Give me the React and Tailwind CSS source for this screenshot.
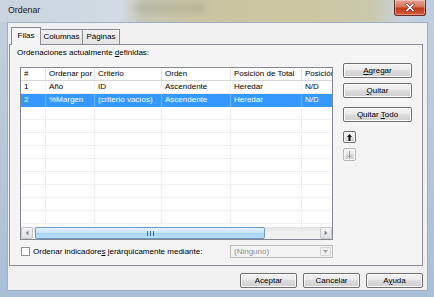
import React from "react";

function WinButton({ children, className = "" }) {
  return (
    <div
      className={
        "flex items-center justify-center rounded-[2px] border border-[#707070] bg-[linear-gradient(180deg,#f2f2f2_0%,#ebebeb_45%,#dddddd_50%,#cfcfcf_100%)] shadow-[inset_0_0_0_1px_#fcfcfc] text-[8px] leading-none text-black " +
        className
      }
    >
      {children}
    </div>
  );
}

const cols = [
  { w: "w-[25px]", label: "#" },
  { w: "w-[49px]", label: "Ordenar por" },
  { w: "w-[67px]", label: "Criterio" },
  { w: "w-[69px]", label: "Orden" },
  { w: "w-[71px]", label: "Posición de Total" },
  { w: "w-[60px]", label: "Posición" },
];

const rows = [
  ["1", "Año", "ID", "Ascendente", "Heredar", "N/D"],
  ["2", "%Margen", "(criterio vacíos)", "Ascendente", "Heredar", "N/D"],
];

export default function App() {
  const emptyRows = Array.from({ length: 10 });
  return (
    <div className="relative flex h-[297px] w-[434px] flex-col overflow-hidden bg-[linear-gradient(180deg,#c3d0dd_0%,#b4c6d8_60%,#a9bfd6_100%)] font-['Liberation_Sans',Arial,sans-serif] text-[8px] text-black">
      {/* title bar */}
      <div className="relative flex h-[22px] shrink-0 items-center bg-[linear-gradient(90deg,#c9d4df_0%,#d2dbe3_28%,#c6c7b6_33%,#c9c4a2_45%,#ccc6a0_70%,#cbc9ad_86%,#c8d3dd_92%,#bccde0_100%)] pl-[8px]">
        <span className="text-[8.8px] text-[#1a1a1a]">Ordenar</span>
        <div className="absolute left-[135px] top-[4px] h-[8px] w-[70px] bg-[#9d9880] opacity-40 blur-[3px]" />
        <div className="absolute right-[8px] top-0 flex h-[16px] w-[32px] items-center justify-center rounded-b-[3px] border border-t-0 border-[#6b2b22] bg-[linear-gradient(180deg,#e8a493_0%,#d7745b_45%,#c43a1c_55%,#d25b34_100%)] shadow-[inset_0_0_0_1px_rgba(255,255,255,0.35)]">
          <svg width="10" height="9" viewBox="0 0 10 9">
            <path d="M2 1.5 L8 7.5 M8 1.5 L2 7.5" stroke="#5a1a10" strokeWidth="2.6" strokeLinecap="square" />
            <path d="M2 1.5 L8 7.5 M8 1.5 L2 7.5" stroke="#ffffff" strokeWidth="1.7" strokeLinecap="square" />
          </svg>
        </div>
      </div>

      {/* client area */}
      <div className="ml-[7px] mr-[6px] flex h-[269px] shrink-0 flex-col border border-[#9fb0c2] bg-[#f0f0f0]">
        {/* tabs */}
        <div className="flex h-[21px] shrink-0 items-end pl-[3px]">
          <div className="relative z-10 mb-[-1px] flex h-[18px] w-[30px] items-center justify-center border border-b-0 border-[#898c95] bg-[#f4f4f4] pb-[1px]">
            Filas
          </div>
          <div className="flex h-[15px] w-[42px] items-center justify-center border border-b-0 border-l-0 border-[#898c95] bg-[linear-gradient(180deg,#f2f2f2,#e4e4e4)]">
            Columnas
          </div>
          <div className="flex h-[15px] w-[37px] items-center justify-center border border-b-0 border-l-0 border-[#898c95] bg-[linear-gradient(180deg,#f2f2f2,#e4e4e4)]">
            Páginas
          </div>
        </div>

        {/* tab panel */}
        <div className="ml-[1px] flex h-[222px] w-[414px] shrink-0 flex-col border border-[#898c95] bg-[#f4f4f4]">
          <div className="ml-[7px] mt-[2px] h-[11px] leading-[11px]">
            Ordenaciones actualmente <span className="underline">d</span>efinidas:
          </div>

          <div className="mt-[5px] flex">
            {/* list view */}
            <div className="ml-[10px] mt-[4px] flex h-[173px] w-[313px] flex-col overflow-hidden border border-[#828790] bg-white">
              <div className="flex h-[13px] shrink-0 border-b border-[#d5d5d5]">
                {cols.map((c, i) => (
                  <div
                    key={i}
                    className={`${c.w} shrink-0 overflow-hidden whitespace-nowrap border-r border-[#e3e4e6] pl-[3px] leading-[12px]`}
                  >
                    {c.label}
                  </div>
                ))}
              </div>
              <div className="flex-1 overflow-hidden">
                {rows.map((r, ri) => (
                  <div
                    key={ri}
                    className={`flex h-[13px] ${ri === 1 ? "bg-[#3399ff] text-white" : "border-b border-[#f0f0f0]"}`}
                  >
                    {r.map((v, i) => (
                      <div
                        key={i}
                        className={`${cols[i].w} shrink-0 overflow-hidden whitespace-nowrap border-r pl-[3px] leading-[12px] ${ri === 1 ? "border-[#6fb6ff]" : "border-[#f0f0f0]"}`}
                      >
                        {v}
                      </div>
                    ))}
                  </div>
                ))}
                {emptyRows.map((_, ri) => (
                  <div key={ri} className="flex h-[13px] border-b border-[#f0f0f0]">
                    {cols.map((c, i) => (
                      <div key={i} className={`${c.w} shrink-0 border-r border-[#f0f0f0]`} />
                    ))}
                  </div>
                ))}
              </div>
              {/* horizontal scrollbar */}
              <div className="flex h-[12px] shrink-0 items-stretch bg-[linear-gradient(180deg,#e3e3e3,#f0f0f0_40%,#f0f0f0)]">
                <div className="flex w-[12px] items-center justify-center rounded-[2px] border border-[#c8c8c8] bg-[linear-gradient(180deg,#f4f4f4,#e2e2e2)]">
                  <svg width="4" height="6" viewBox="0 0 4 6">
                    <path d="M3.5 0.5 L0.5 3 L3.5 5.5 Z" fill="#8a8a8a" />
                  </svg>
                </div>
                <div className="ml-[2px] flex w-[230px] items-center justify-center rounded-[2px] border border-[#6a9bc4] bg-[linear-gradient(180deg,#e3f2fc_0%,#c8e5f8_45%,#a9d5f3_55%,#b8def6_100%)]">
                  <svg width="7" height="5" viewBox="0 0 7 5">
                    <path d="M0.5 0 V5 M3.5 0 V5 M6.5 0 V5" stroke="#3a6f98" strokeWidth="1" />
                  </svg>
                </div>
                <div className="flex-1" />
                <div className="flex w-[12px] items-center justify-center rounded-[2px] border border-[#c8c8c8] bg-[linear-gradient(180deg,#f4f4f4,#e2e2e2)]">
                  <svg width="4" height="6" viewBox="0 0 4 6">
                    <path d="M0.5 0.5 L3.5 3 L0.5 5.5 Z" fill="#8a8a8a" />
                  </svg>
                </div>
              </div>
            </div>

            {/* right buttons */}
            <div className="ml-[10px] flex w-[69px] flex-col">
              <WinButton className="h-[15px]">
                <span>
                  <span className="underline">A</span>gregar
                </span>
              </WinButton>
              <WinButton className="mt-[5px] h-[15px]">
                <span>
                  <span className="underline">Q</span>uitar
                </span>
              </WinButton>
              <WinButton className="mt-[9px] h-[15px]">
                <span>
                  Quitar <span className="underline">T</span>odo
                </span>
              </WinButton>
              <WinButton className="mt-[9px] h-[12px] w-[13px]">
                <svg width="5" height="7" viewBox="0 0 5 7">
                  <path d="M2.5 0 L5 3 H3.5 V7 H1.5 V3 H0 Z" fill="#111" />
                </svg>
              </WinButton>
              <WinButton className="mt-[5px] h-[13px] w-[13px] border-[#b5b5b5]">
                <svg width="5" height="7" viewBox="0 0 5 7">
                  <path d="M2.5 0 V6.5 M0.8 4.5 L2.5 6.5 L4.2 4.5" stroke="#9a9a9a" strokeWidth="1" fill="none" />
                </svg>
              </WinButton>
            </div>
          </div>

          {/* checkbox row */}
          <div className="mt-[5px] flex h-[13px] items-center">
            <div className="ml-[11px] h-[9px] w-[9px] border border-[#8f8f8f] bg-white" />
            <span className="ml-[3px]">
              Ordenar indicadore<span className="underline">s</span> jerárquicamente mediante:
            </span>
            <div className="ml-auto mr-[89px] flex h-[13px] w-[103px] items-center border border-[#b8bcc0] bg-[#f4f4f4]">
              <span className="flex-1 pl-[3px] text-[#8d8d8d]">(Ninguno)</span>
              <div className="mr-[1px] flex h-[9px] w-[11px] items-center justify-center rounded-[1px] border border-[#d6d6d6] bg-[#f0f0f0]">
                <svg width="5" height="3" viewBox="0 0 5 3">
                  <path d="M0 0 H5 L2.5 3 Z" fill="#a0a0a0" />
                </svg>
              </div>
            </div>
          </div>
        </div>

        {/* bottom buttons */}
        <div className="mt-[7px] flex justify-end gap-[6px] pr-[4px]">
          <WinButton className="h-[15px] w-[57px] border-[#3c7fb1]">Aceptar</WinButton>
          <WinButton className="h-[15px] w-[57px]">Cancelar</WinButton>
          <WinButton className="h-[15px] w-[57px]">
            <span>
              A<span className="underline">y</span>uda
            </span>
          </WinButton>
        </div>
      </div>
    </div>
  );
}
